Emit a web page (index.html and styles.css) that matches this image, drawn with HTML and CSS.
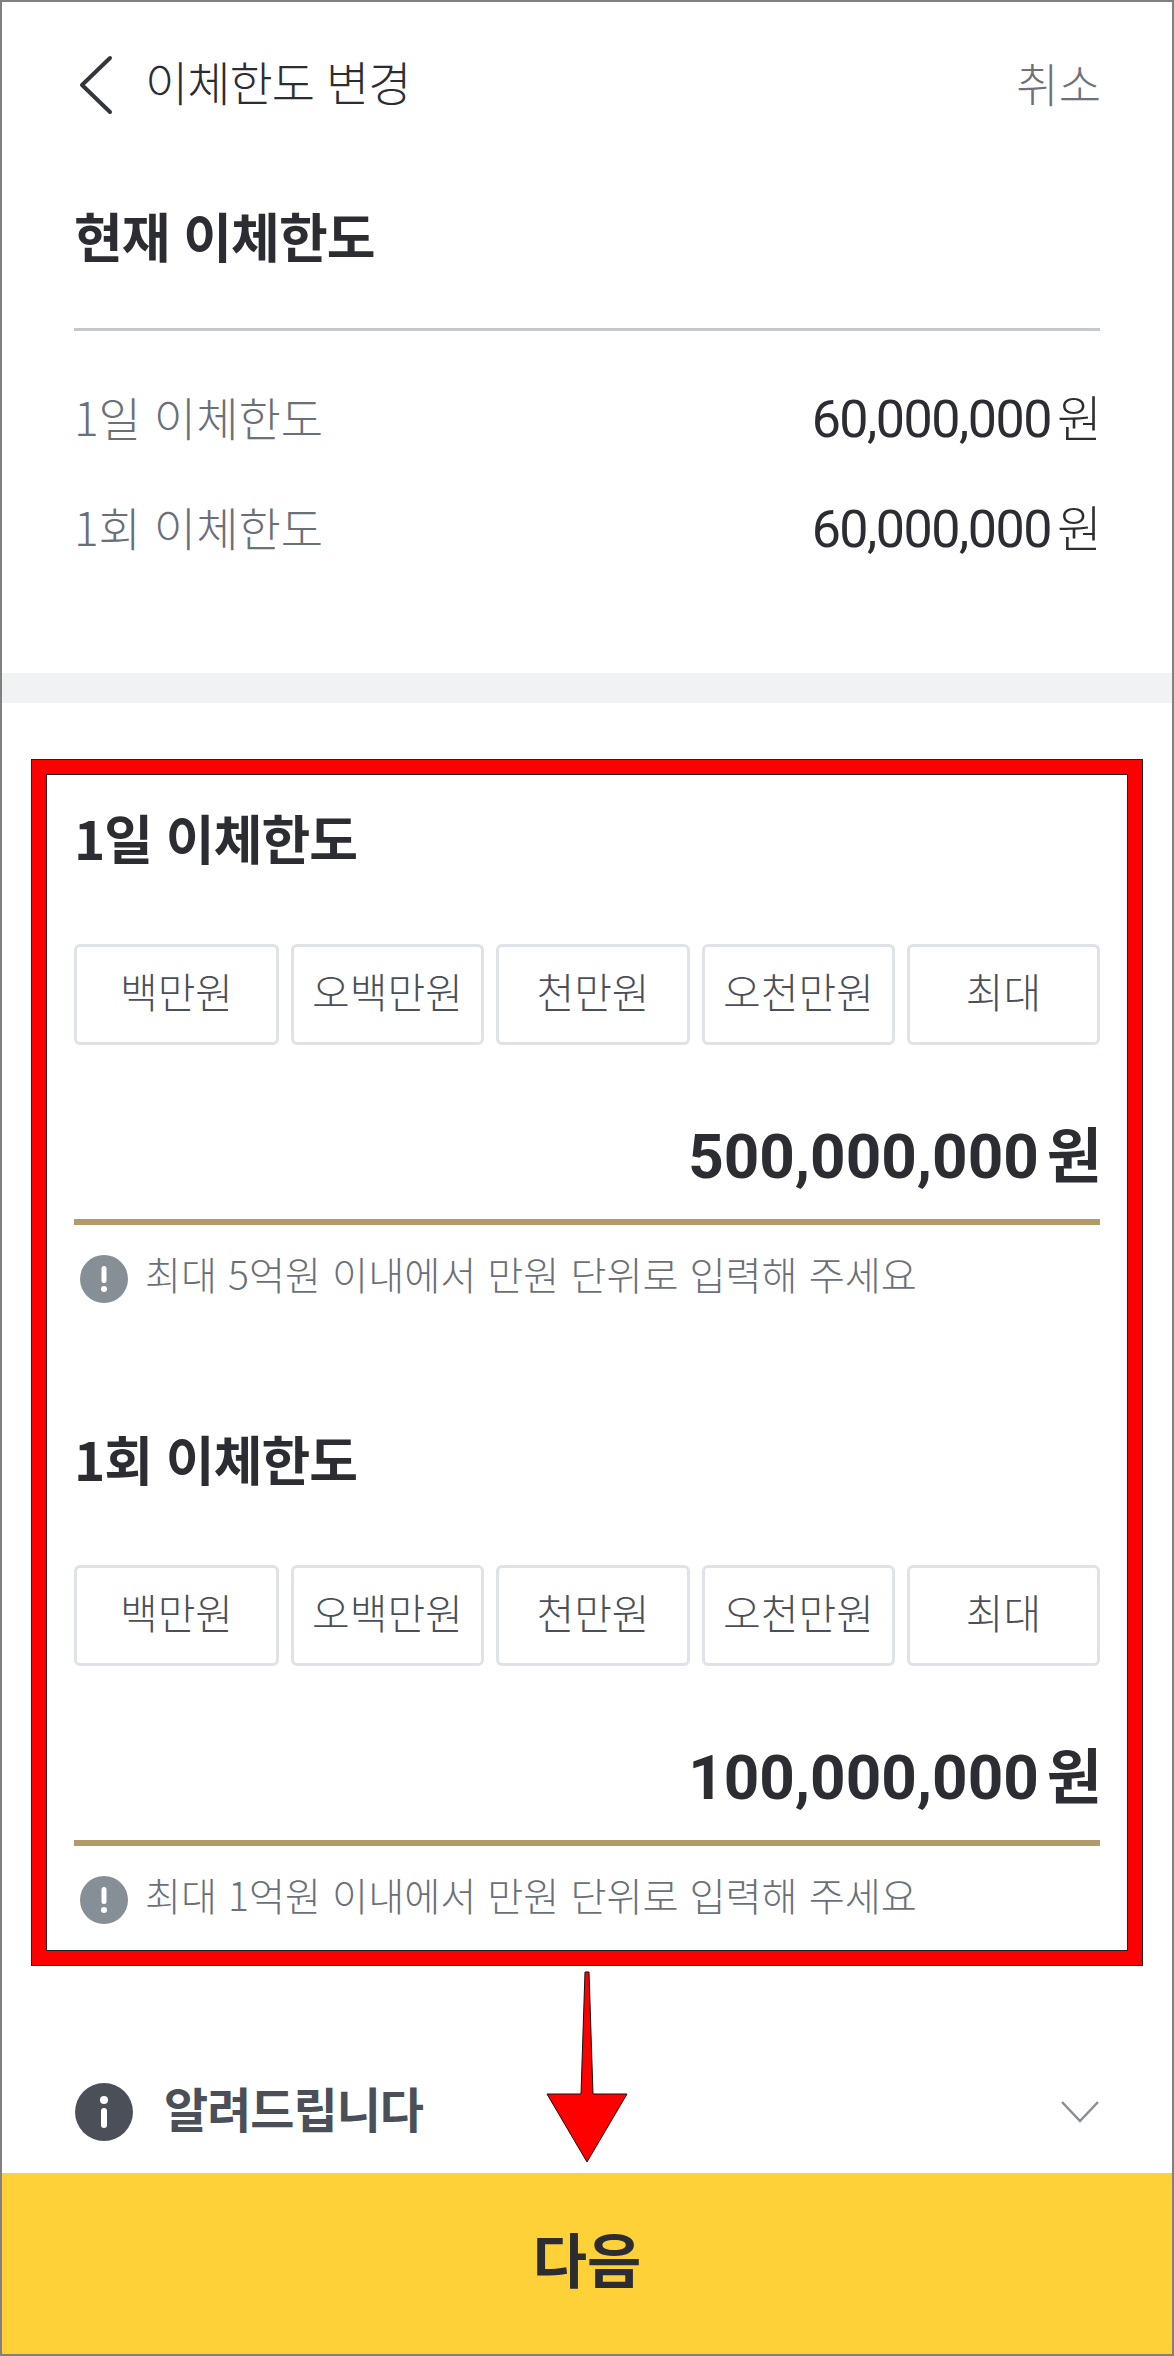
FILE: index.html
```html
<!DOCTYPE html>
<html lang="ko">
<head>
  <meta charset="UTF-8" />
  <meta name="viewport" content="width=device-width, initial-scale=1.0"/>
  <title>이체한도 변경</title>
  <link rel="stylesheet" href="styles.css">
</head>
<body>
  <div class="page">
    <header class="top-bar">
      <svg class="back-icon" width="36" height="60" viewBox="0 0 36 60"><polyline points="33,3 5,30 33,57" /></svg>
      <span class="top-title">이체한도 변경</span>
      <span class="top-cancel">취소</span>
    </header>

    <section class="current">
      <h2 class="current-title">현재 이체한도</h2>
      <div class="current-list">
        <div class="current-row">
          <span class="current-label">1일 이체한도</span>
          <span class="current-value"><span class="num">60,000,000</span>원</span>
        </div>
        <div class="current-row">
          <span class="current-label">1회 이체한도</span>
          <span class="current-value"><span class="num">60,000,000</span>원</span>
        </div>
      </div>
    </section>

    <div class="band"></div>

    <section class="limit">
      <h3 class="limit-title">1일 이체한도</h3>
      <div class="chips">
        <button class="chip">백만원</button>
        <button class="chip">오백만원</button>
        <button class="chip">천만원</button>
        <button class="chip">오천만원</button>
        <button class="chip">최대</button>
      </div>
      <div class="amount"><span class="num">500,000,000</span>원</div>
      <div class="hint">
        <svg class="hint-icon" width="48" height="48" viewBox="0 0 48 48"><circle cx="24" cy="24" r="24" /><rect x="21.5" y="11" width="5" height="17" rx="2.5" /><circle class="dot" cx="24" cy="34" r="3" /></svg>
        <span class="hint-text">최대 5억원 이내에서 만원 단위로 입력해 주세요</span>
      </div>
    </section>

    <section class="limit limit-second">
      <h3 class="limit-title">1회 이체한도</h3>
      <div class="chips">
        <button class="chip">백만원</button>
        <button class="chip">오백만원</button>
        <button class="chip">천만원</button>
        <button class="chip">오천만원</button>
        <button class="chip">최대</button>
      </div>
      <div class="amount"><span class="num">100,000,000</span>원</div>
      <div class="hint">
        <svg class="hint-icon" width="48" height="48" viewBox="0 0 48 48"><circle cx="24" cy="24" r="24" /><rect x="21.5" y="11" width="5" height="17" rx="2.5" /><circle class="dot" cx="24" cy="34" r="3" /></svg>
        <span class="hint-text">최대 1억원 이내에서 만원 단위로 입력해 주세요</span>
      </div>
    </section>

    <div class="notice">
      <svg class="notice-icon" width="58" height="58" viewBox="0 0 58 58"><circle cx="29" cy="29" r="29" /><circle class="dot" cx="29" cy="17" r="4" /><rect x="26" y="25" width="6" height="20" rx="3" /></svg>
      <span class="notice-text">알려드립니다</span>
      <svg class="notice-arrow" width="38" height="22" viewBox="0 0 38 22"><polyline points="1,1 19,20 37,1" /></svg>
    </div>

    <button class="next">다음</button>
  </div>

  <div class="mark-box"></div>
  <svg class="mark-arrow" width="1174" height="2356" viewBox="0 0 1174 2356"><polygon points="585,1972 589,1972 593,2094 627,2094 587,2162 547,2094 581,2094" /></svg>
</body>
</html>
```

FILE: styles.css
```css
* {
  box-sizing: border-box;
}

body {
  margin: 0;
  background-color: #ffffff;
  color: #2b2d33;
  font-family: "Noto Sans CJK KR", "Noto Sans", sans-serif;
}

h2,
h3 {
  margin: 0;
}

.page {
  display: flex;
  flex-direction: column;
  width: 1174px;
  height: 2356px;
  border: 2px solid #808080;
  overflow: hidden;
}

.num {
  font-family: Roboto, sans-serif;
}

.top-bar {
  display: flex;
  align-items: center;
  height: 166px;
  padding: 0 71px 0 75px;
}

.back-icon {
  flex: none;
  margin-right: 32px;
}

.back-icon polyline {
  fill: none;
  stroke: #33363c;
  stroke-width: 4;
  stroke-linecap: round;
  stroke-linejoin: round;
}

.top-title {
  padding-bottom: 9px;
  font-size: 47px;
  font-weight: 300;
  letter-spacing: -1px;
}

.top-cancel {
  margin-left: auto;
  padding-bottom: 7px;
  font-size: 46px;
  font-weight: 300;
  color: #6d727a;
}

.current {
  padding: 40px 72px 0;
}

.current-title {
  height: 60px;
  font-size: 53px;
  font-weight: 700;
  line-height: 54px;
  letter-spacing: -1px;
}

.current-list {
  margin-top: 60px;
  padding: 34px 0 88px;
  border-top: 3px solid #c4c8cc;
}

.current-row {
  display: flex;
  justify-content: space-between;
  align-items: center;
  height: 110px;
  padding-bottom: 9px;
}

.current-label {
  font-size: 46px;
  font-weight: 300;
  color: #6b7078;
}

.current-value {
  margin-right: -2px;
  font-size: 49px;
  font-weight: 300;
}

.current-value .num {
  margin-right: 6px;
  font-size: 52px;
  font-weight: 400;
  letter-spacing: -1.5px;
}

.band {
  flex: none;
  height: 30px;
  background-color: #f1f2f4;
}

.limit {
  padding: 109px 72px 0;
}

.limit-second {
  padding-top: 130px;
}

.limit-title {
  height: 60px;
  font-size: 53px;
  font-weight: 700;
  line-height: 50px;
  letter-spacing: -1px;
}

.chips {
  display: grid;
  grid-template-columns: 205px 193px 194px 193px 193px;
  gap: 12px;
  height: 101px;
  margin-top: 72px;
}

.chip {
  padding: 0 0 10px;
  border: 3px solid #dfe3e7;
  border-radius: 6px;
  background-color: #ffffff;
  color: #4b4f57;
  font-family: inherit;
  font-size: 41px;
  font-weight: 300;
}

.amount {
  height: 80px;
  margin-top: 71px;
  margin-right: -2px;
  font-size: 60px;
  font-weight: 700;
  line-height: 71px;
  text-align: right;
}

.amount .num {
  margin-right: 8px;
  font-size: 62px;
}

.hint {
  display: flex;
  align-items: center;
  gap: 17px;
  height: 84px;
  margin-top: 23px;
  padding-top: 30px;
  padding-left: 6px;
  border-top: 6px solid #b39a68;
  font-size: 39.2px;
  font-weight: 300;
  color: #6b7078;
}

.hint-text {
  padding-bottom: 12px;
}

.hint-icon {
  flex: none;
  fill: #868e96;
}

.hint-icon rect,
.hint-icon .dot {
  fill: #ffffff;
}

.notice {
  display: flex;
  align-items: center;
  gap: 31px;
  height: 58px;
  margin-top: 159px;
  padding: 0 73px;
  color: #4b4f57;
}

.notice-icon {
  flex: none;
  fill: #4b4f57;
}

.notice-icon rect,
.notice-icon .dot {
  fill: #ffffff;
}

.notice-text {
  padding-bottom: 10px;
  font-size: 48px;
  font-weight: 700;
  letter-spacing: -1px;
}

.notice-arrow {
  margin-left: auto;
  fill: none;
  stroke: #868e96;
  stroke-width: 2.5;
}

.next {
  flex: none;
  height: 181px;
  margin-top: auto;
  padding: 0 0 12px;
  border: none;
  background-color: #ffd138;
  color: #2b2d33;
  font-family: inherit;
  font-size: 59px;
  font-weight: 700;
}

.mark-box {
  position: absolute;
  left: 32px;
  top: 760px;
  width: 1110px;
  height: 1205px;
  border: 14px solid #ff0000;
  outline: 1px solid #222222;
  box-shadow: inset 0 0 0 1px #222222;
}

.mark-arrow {
  position: absolute;
  left: 0;
  top: 0;
  pointer-events: none;
}

.mark-arrow polygon {
  fill: #ff0000;
  stroke: #111111;
  stroke-width: 1;
}
```
